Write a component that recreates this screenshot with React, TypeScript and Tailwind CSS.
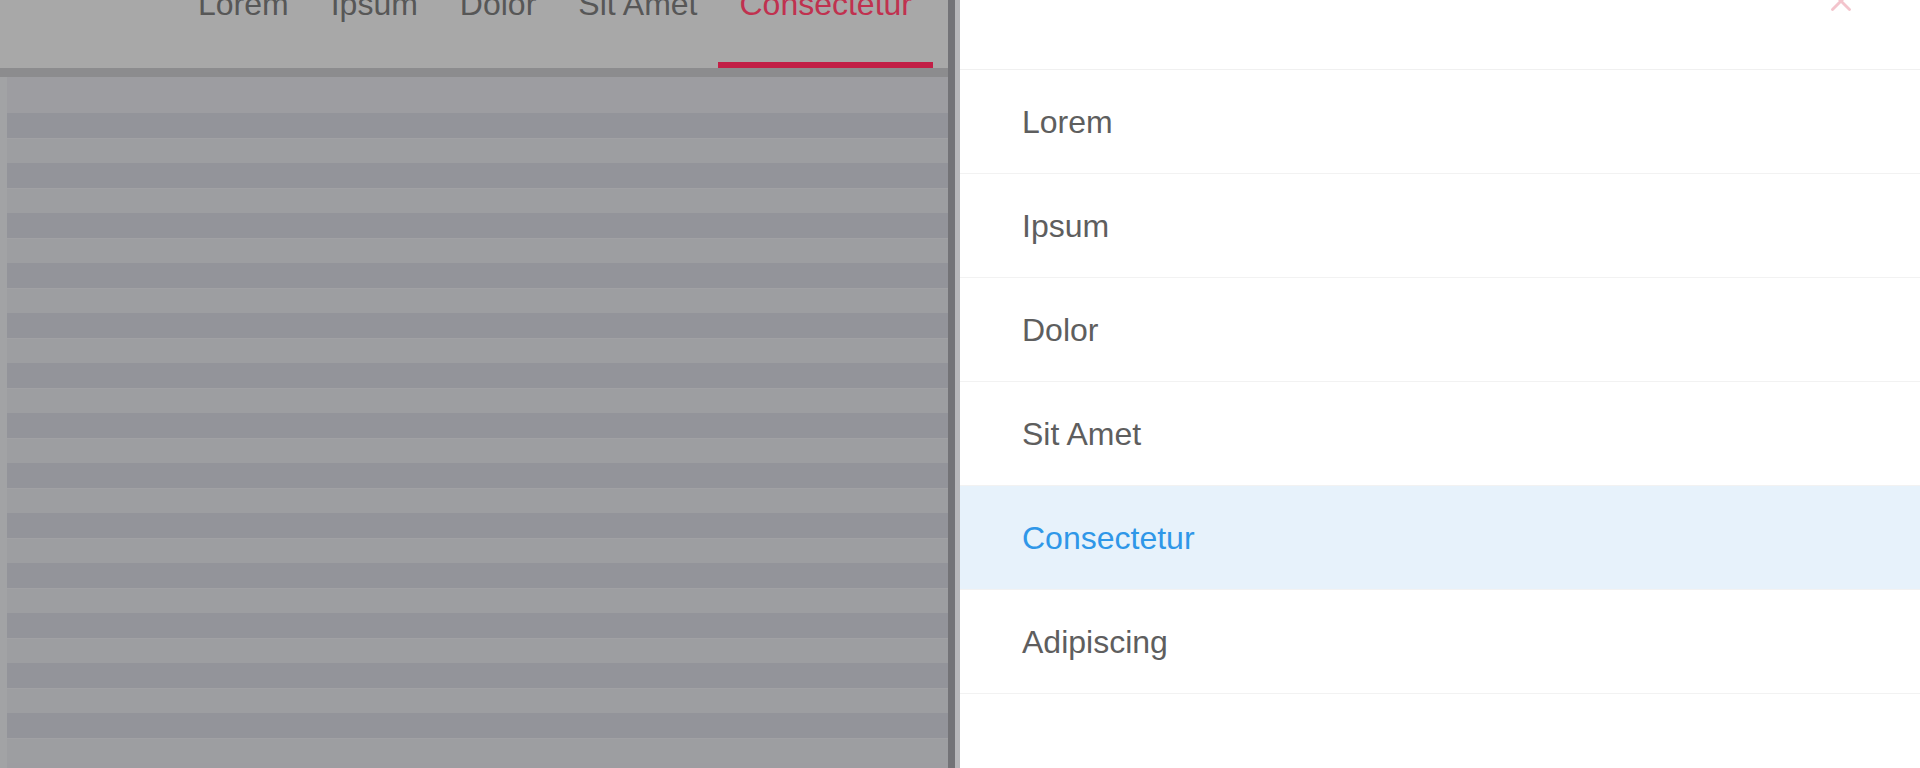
import { X } from "lucide-react";

const tabs = ["Lorem", "Ipsum", "Dolor", "Sit Amet", "Consectetur"];
const items = ["Lorem", "Ipsum", "Dolor", "Sit Amet", "Consectetur", "Adipiscing"];

export default function App() {
  const activeTab = "Consectetur";
  const activeItem = "Consectetur";

  return (
    <div
      className="flex h-[768px] w-[1920px] overflow-hidden bg-white"
      style={{ fontFamily: '"Liberation Sans", Arial, sans-serif' }}
    >
      {/* dimmed page behind the drawer */}
      <div className="flex w-[948px] shrink-0 flex-col bg-[#a5a6a8]">
        <div className="flex h-[68px] shrink-0 items-start bg-[#a8a8a8] pl-[177px]">
          {tabs.map((t) => (
            <div
              key={t}
              className={`relative flex h-full items-start px-[21px] ${
                t === activeTab ? "text-[#c0314f]" : "text-[#575757]"
              }`}
            >
              <span className="-mt-[16px] text-[32px] leading-[40px]">{t}</span>
              {t === activeTab && (
                <span className="absolute right-0 bottom-0 left-0 h-[6px] bg-[#c21f46]" />
              )}
            </div>
          ))}
        </div>
        <div className="h-[9px] shrink-0 bg-[#8c8c8e]" />
        <div className="flex flex-1 flex-col border-l-[7px] border-l-[#a2a3a5] bg-[#9d9da1]">
          <div className="h-[36px] shrink-0 bg-[#9d9da1]" />
          {Array.from({ length: 13 }, (_, i) => (
            <div key={i} className="shrink-0">
              <div className="h-[25px] bg-[#93949a]" />
              <div className="h-[25px] border-t border-[#a1a1a4] bg-[#9d9ea1]" />
            </div>
          ))}
        </div>
      </div>

      {/* drawer edge */}
      <div className="w-[7px] shrink-0 bg-[#737377]" />
      <div className="w-[5px] shrink-0 bg-[#b6b6b9]" />

      {/* drawer */}
      <div className="flex flex-1 flex-col bg-white">
        <div className="relative h-[70px] shrink-0 border-b border-[#f0f0f0]">
          <X className="absolute -top-[16px] right-[62px] h-[34px] w-[34px] text-[#e88a9a] opacity-50" />
        </div>
        {items.map((item) => (
          <div
            key={item}
            className={`flex h-[104px] shrink-0 items-center border-b border-[#f2f2f2] pl-[62px] text-[32px] ${
              item === activeItem
                ? "bg-[#e7f2fb] text-[#2f97e8]"
                : "text-[#5e5e5e]"
            }`}
          >
            {item}
          </div>
        ))}
      </div>
    </div>
  );
}
